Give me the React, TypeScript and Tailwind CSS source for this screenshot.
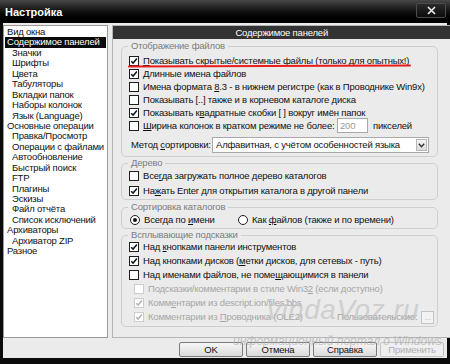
import React from "react";

const U = ({ children }: { children: React.ReactNode }) => (
  <span className="underline decoration-[1px] underline-offset-[1px]">{children}</span>
);

function Check({ checked, disabled }: { checked?: boolean; disabled?: boolean }) {
  return (
    <span
      className={
        disabled
          ? "flex h-[10px] w-[10px] shrink-0 items-center justify-center border border-[#cdcdcd] bg-white"
          : "flex h-[10px] w-[10px] shrink-0 items-center justify-center border border-[#1e1e1e] bg-white"
      }
    >
      {checked && (
        <svg width="8" height="8" viewBox="0 0 8 8">
          <path d="M1.2 4.2 L3.1 6.1 L6.9 1.6" fill="none" stroke={disabled ? "#b4b4b4" : "#151515"} strokeWidth="1.5" />
        </svg>
      )}
    </span>
  );
}

function Radio({ checked }: { checked?: boolean }) {
  return (
    <span className="flex h-[10px] w-[10px] shrink-0 items-center justify-center rounded-full border border-[#1e1e1e] bg-white">
      {checked && <span className="h-[4px] w-[4px] rounded-full bg-[#151515]" />}
    </span>
  );
}

const tree: { t: string; sub?: boolean; sel?: boolean }[] = [
  { t: "Вид окна" },
  { t: "Содержимое панелей", sel: true },
  { t: "Значки", sub: true },
  { t: "Шрифты", sub: true },
  { t: "Цвета", sub: true },
  { t: "Табуляторы", sub: true },
  { t: "Вкладки папок", sub: true },
  { t: "Наборы колонок", sub: true },
  { t: "Язык (Language)", sub: true },
  { t: "Основные операции" },
  { t: "Правка/Просмотр", sub: true },
  { t: "Операции с файлами", sub: true },
  { t: "Автообновление", sub: true },
  { t: "Быстрый поиск", sub: true },
  { t: "FTP", sub: true },
  { t: "Плагины", sub: true },
  { t: "Эскизы", sub: true },
  { t: "Файл отчёта", sub: true },
  { t: "Список исключений", sub: true },
  { t: "Архиваторы" },
  { t: "Архиватор ZIP", sub: true },
  { t: "Разное" },
];

const row = "flex items-center gap-[4px] whitespace-nowrap";

export default function App() {
  return (
    <div
      className="flex h-[364px] w-[450px] flex-col overflow-hidden bg-[#0b0b0b] text-[9.5px] leading-[12px] tracking-[-0.2px] text-[#111]"
      style={{ fontFamily: '"Liberation Sans", Arial, sans-serif' }}
    >
      {/* Title bar */}
      <div className="flex h-[23px] shrink-0 bg-gradient-to-b from-[#474747] via-[#121212] to-[#000]">
        <div className="pl-[5px] pt-[6px] text-[11px] font-bold leading-[12px] tracking-normal text-white">Настройка</div>
        <div className="ml-auto mr-[4px] mt-[3px] flex h-[15px] w-[30px] items-center justify-center rounded-[2px] border border-[#4c4c4c] bg-gradient-to-b from-[#2a2a2a] to-[#0c0c0c]">
          <svg width="9" height="9" viewBox="0 0 9 9">
            <path d="M1 1 L8 8 M8 1 L1 8" stroke="#e8e8e8" strokeWidth="1.7" />
          </svg>
        </div>
      </div>

      {/* Body */}
      <div className="relative mx-[3px] mb-[6px] flex flex-1 flex-col bg-[#ebebeb] pt-[2px]">
        <div className="flex h-[313px] gap-[4px]">
          {/* Tree */}
          <div className="w-[105px] shrink-0 border border-[#9a9a9a] bg-white pt-[1px]">
            {tree.map((it) => (
              <div
                key={it.t}
                className={
                  it.sel
                    ? "ml-[1px] mr-[1px] h-[10.45px] whitespace-nowrap bg-[#0a0a0a] pl-[2px] leading-[10.45px] text-white"
                    : it.sub
                    ? "h-[10.45px] whitespace-nowrap pl-[8px] leading-[10.45px]"
                    : "h-[10.45px] whitespace-nowrap pl-[3px] leading-[10.45px]"
                }
              >
                {it.t}
              </div>
            ))}
          </div>

          {/* Right panel */}
          <div className="mr-[1px] flex flex-1 flex-col border border-[#b4b4b4] bg-[#ebebeb]">
            <div className="flex h-[13px] shrink-0 items-center justify-center bg-[#333333] text-white">
              Содержимое панелей
            </div>

            {/* Group 1 */}
            <fieldset className="ml-[8px] mr-[12px] mt-[2px] rounded-[5px] border border-[#cfcfcf] pb-[3px] pt-[3px]">
              <legend className="ml-[6px] px-[3px] leading-[10px] text-[#7c7c7c]">Отображение файлов</legend>
              <div className={`relative h-[13px] pl-[7px] ${row}`}>
                <Check checked />
                <span>
                  <U>П</U>оказывать скрытые/системные файлы (только для опытных!)
                </span>
                <span className="absolute left-[6px] top-[11px] h-[2px] w-[283px] -rotate-[0.2deg] rounded-full bg-[#ea1c1c]" />
              </div>
              <div className={`h-[13px] pl-[7px] ${row}`}>
                <Check checked />
                <span>
                  <U>Д</U>линные имена файлов
                </span>
              </div>
              <div className={`h-[13px] pl-[7px] ${row}`}>
                <Check />
                <span>
                  Имена формата <U>8</U>.3 - в нижнем регистре (как в Проводнике Win9x)
                </span>
              </div>
              <div className={`h-[13px] pl-[7px] ${row}`}>
                <Check />
                <span>Показывать [..] также и в корневом каталоге диска</span>
              </div>
              <div className={`h-[13px] pl-[7px] ${row}`}>
                <Check checked />
                <span>
                  Показывать к<U>в</U>адратные скобки [ ] вокруг имён папок
                </span>
              </div>
              <div className={`h-[13px] pl-[7px] ${row}`}>
                <Check />
                <span className="w-[190px]">
                  <U>Ш</U>ирина колонок в кратком режиме не более:
                </span>
                <span className="flex h-[15px] w-[31px] items-center border border-[#a9a9a9] bg-white pl-[2px] text-[#9a9a9a]">
                  200
                </span>
                <span className="ml-[1px]">пикселей</span>
              </div>
              <div className="mt-[5px] flex h-[16px] items-center whitespace-nowrap pl-[9px]">
                <span className="w-[81px]">
                  Метод <U>с</U>ортировки:
                </span>
                <span className="flex h-[16px] w-[217px] items-center border border-[#a9a9a9] bg-white pl-[3px]">
                  <span className="flex-1">Алфавитная, с учётом особенностей языка</span>
                  <span className="mr-[1px] flex h-[12px] w-[11px] items-center justify-center border border-[#b8b8b8] bg-gradient-to-b from-[#f6f6f6] to-[#dcdcdc]">
                    <svg width="7" height="5" viewBox="0 0 7 5">
                      <path d="M0.8 0.8 L3.5 3.8 L6.2 0.8" fill="none" stroke="#333" strokeWidth="1.4" />
                    </svg>
                  </span>
                </span>
              </div>
            </fieldset>

            {/* Group 2 */}
            <fieldset className="ml-[8px] mr-[12px] mt-[1px] rounded-[5px] border border-[#cfcfcf] pb-[1px]">
              <legend className="ml-[6px] px-[3px] leading-[10px] text-[#7c7c7c]">Дерево</legend>
              <div className={`h-[15px] pl-[7px] ${row}`}>
                <Check />
                <span>
                  Все<U>г</U>да загружать полное дерево каталогов
                </span>
              </div>
              <div className={`h-[15px] pl-[7px] ${row}`}>
                <Check checked />
                <span>
                  На<U>ж</U>ать Enter для открытия каталога в другой панели
                </span>
              </div>
            </fieldset>

            {/* Group 3 */}
            <fieldset className="ml-[8px] mr-[12px] mt-[2px] rounded-[5px] border border-[#cfcfcf] pb-[1px]">
              <legend className="ml-[6px] px-[3px] leading-[10px] text-[#7c7c7c]">Сортировка каталогов</legend>
              <div className="flex h-[15px] items-center whitespace-nowrap pl-[8px]">
                <span className="flex w-[108px] items-center gap-[4px]">
                  <Radio checked />
                  <span>
                    Всегда по <U>и</U>мени
                  </span>
                </span>
                <span className="flex items-center gap-[4px]">
                  <Radio />
                  <span>
                    Как <U>ф</U>айлов (также и по времени)
                  </span>
                </span>
              </div>
            </fieldset>

            {/* Group 4 */}
            <fieldset className="ml-[8px] mr-[12px] mt-[1px] rounded-[5px] border border-[#cfcfcf] pb-[2px]">
              <legend className="ml-[6px] px-[3px] leading-[10px] text-[#7c7c7c]">Всплывающие подсказки</legend>
              <div className={`h-[14px] pl-[7px] ${row}`}>
                <Check checked />
                <span>
                  Над <U>к</U>нопками панели инструментов
                </span>
              </div>
              <div className={`h-[14px] pl-[7px] ${row}`}>
                <Check checked />
                <span>
                  Над кнопками дисков (<U>м</U>етки дисков, для сетевых - путь)
                </span>
              </div>
              <div className={`h-[14px] pl-[7px] ${row}`}>
                <Check />
                <span>
                  Над именами файлов, не поме<U>щ</U>ающимися в панели
                </span>
              </div>
              <div className={`h-[14px] pl-[12px] text-[#a6a6a6] ${row}`}>
                <Check disabled />
                <span>
                  Подсказки/комментарии в стиле Win3<U>2</U> (если доступно)
                </span>
              </div>
              <div className={`h-[14px] pl-[12px] text-[#a6a6a6] ${row}`}>
                <Check checked disabled />
                <span>
                  Комм<U>е</U>нтарии из descript.ion/files.bbs
                </span>
              </div>
              <div className={`h-[14px] pl-[12px] text-[#a6a6a6] ${row}`}>
                <Check checked disabled />
                <span className="w-[185px]">
                  Комментарии из <U>П</U>роводника (OLE2)
                </span>
                <span>Пользовательские:</span>
                <span className="ml-auto mr-[3px] flex h-[13px] w-[13px] items-center justify-center border border-[#c4c4c4] bg-[#f2f2f2] text-[9px] leading-[9px] text-[#bcbcbc]">
                  ...
                </span>
              </div>
            </fieldset>
          </div>
        </div>

        {/* Buttons */}
        <div className="mt-[4px] flex h-[15px] justify-end gap-[3px] pr-[3px]">
          {["OK", "Отмена", "Справка"].map((b) => (
            <div
              key={b}
              className="flex h-[15px] w-[64px] items-center justify-center rounded-[2px] border border-[#7a7a7a] bg-gradient-to-b from-[#f7f7f7] to-[#dadada]"
            >
              {b}
            </div>
          ))}
          <div className="flex h-[15px] w-[64px] items-center justify-center rounded-[2px] border border-[#c2c2c2] bg-[#efefef] text-[#b0b0b0]">
            Применить
          </div>
        </div>

        {/* Watermark overlay */}
        <div className="pointer-events-none absolute left-[264px] top-[273px] text-[28px] italic leading-[28px] tracking-[0.5px] text-[#bdbdbd] opacity-60">
          vindaVoz.ru
        </div>
        <div className="pointer-events-none absolute left-[230px] top-[312px] text-[12px] italic leading-[12px] tracking-normal text-[#b0b0b0] opacity-70">
          информационный портал о Windows
        </div>
      </div>
    </div>
  );
}
